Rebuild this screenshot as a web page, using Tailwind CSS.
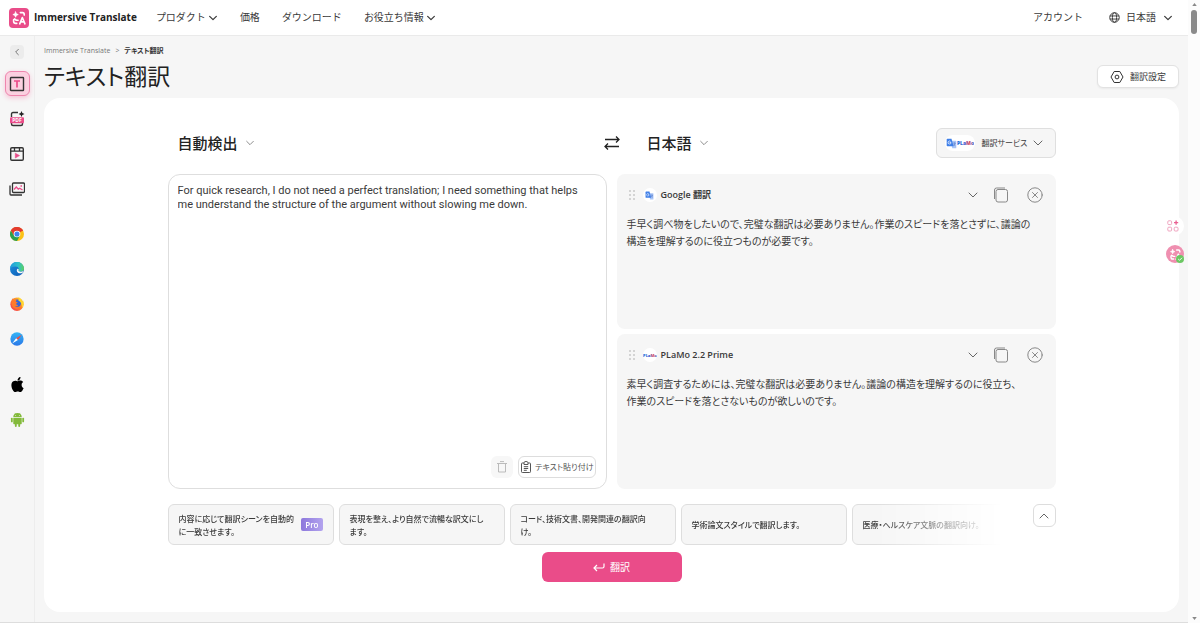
<!DOCTYPE html>
<html lang="ja">
<head>
<meta charset="utf-8">
<meta name="viewport" content="width=device-width, initial-scale=1">
<title>テキスト翻訳 - Immersive Translate</title>
<script src="https://cdn.jsdelivr.net/npm/@tailwindcss/browser@4"></script>
</head>
<body class="flex min-h-screen bg-[#f6f6f6] font-['Open_Sans','Noto_Sans_CJK_JP',sans-serif] text-[10px] text-[#3a3a3a] [font-feature-settings:'palt']">

<svg class="absolute size-0" aria-hidden="true">
  <defs>
    <linearGradient id="plamo-fill" x1="0" x2="1"><stop offset="0" stop-color="#1d6fd8"/><stop offset=".45" stop-color="#3b5bd0"/><stop offset=".7" stop-color="#e0455a"/><stop offset="1" stop-color="#3b6fe0"/></linearGradient>
    <linearGradient id="edge-fill" x1="0" y1="0" x2="1" y2="1"><stop offset="0" stop-color="#1f8fdc"/><stop offset="1" stop-color="#0c59b4"/></linearGradient>
    <linearGradient id="edge-top" x1="0" x2="1"><stop offset="0" stop-color="#1f9ae0"/><stop offset=".6" stop-color="#2fc0c8"/><stop offset="1" stop-color="#5fd35a"/></linearGradient>
    <linearGradient id="fox-fill" x1="0" y1="1" x2="1" y2="0"><stop offset="0" stop-color="#f0305a"/><stop offset=".5" stop-color="#ff7a2a"/><stop offset="1" stop-color="#ffe02e"/></linearGradient>
    <linearGradient id="safari-fill" x1="0" y1="0" x2="0" y2="1"><stop offset="0" stop-color="#35b4f5"/><stop offset="1" stop-color="#2a78e8"/></linearGradient>
    <symbol id="chevron" viewBox="0 0 12 12"><path d="M2 4l4 4 4-4" fill="none" stroke="currentColor" stroke-linecap="round" stroke-linejoin="round"/></symbol>
    <symbol id="mark" viewBox="0 0 20 20" fill="none" stroke="#fff" stroke-width="1.8" stroke-linecap="round" stroke-linejoin="round">
      <path d="M6.200 3.200l.9 2.100 2.100.9-2.100.9-.9 2.100-.9-2.100-2.100-.9 2.100-.9z" fill="#fff" stroke-width=".8"/>
      <path d="M11.500 4h2.500q1.800 0 1.800 2v.8M4 12v1.500q0 2.500 2.500 2.500h1M5 11l2 1.500h2M10.800 16.500l2.900-7 2.900 7M11.800 14.300h3.800"/>
    </symbol>
    <symbol id="gtranslate" viewBox="0 0 16 16">
      <path d="M7 4h7q1 0 1 1v9q0 1-1 1H9z" fill="#a9c5f7"/><path d="M2 1h6l3 11H2q-1 0-1-1V2q0-1 1-1z" fill="#3f7fe8"/>
      <path d="M7.300 6.500H5.200M7.300 6.500A2.200 2.200 0 1 1 6.500 4.900" fill="none" stroke="#fff"/><path d="M10.500 7.500h3.500M12.200 6.500v1M13.300 7.500q-.5 2.500-2.300 3.800M11.200 9q.8 1.600 2.300 2.400" stroke="#4a6fc0" stroke-width=".8" fill="none"/>
    </symbol>
    <symbol id="grip" viewBox="0 0 6 10"><g fill="#999"><circle cx="1" cy="1" r=".7"/><circle cx="5" cy="1" r=".7"/><circle cx="1" cy="5" r=".7"/><circle cx="5" cy="5" r=".7"/><circle cx="1" cy="9" r=".7"/><circle cx="5" cy="9" r=".7"/></g></symbol>
    <symbol id="copy" viewBox="0 0 16 16"><g fill="none" stroke="#888"><rect x="3" y="2.500" width="11.500" height="12.500" rx="2"/><path d="M1.500 12V3q0-2 2-2h8.500"/></g></symbol>
    <symbol id="close" viewBox="0 0 16 16"><g fill="none" stroke="#888" stroke-linecap="round"><circle cx="8" cy="8" r="7.200"/><path d="M5.500 5.500l5 5M10.500 5.500l-5 5"/></g></symbol>
  </defs>
</svg>

<div class="flex min-w-0 flex-1 flex-col border-b border-[#ddd]">
  <header class="flex h-9 items-center border-b border-[#eaeaea] bg-white pr-[15px] pl-[9px] [font-feature-settings:normal]">
    <a href="#" class="flex items-center gap-[5px] text-[10px] font-bold text-[#222]">
      <span class="flex size-5 items-center justify-center rounded bg-[#e94c89]"><svg class="size-[18px]"><use href="#mark"/></svg></span>
      Immersive Translate
    </a>
    <nav class="ml-[19px] flex items-center gap-[22px]">
      <button class="flex items-center gap-0.5">プロダクト<svg class="size-2.5 stroke-[1.500]"><use href="#chevron"/></svg></button>
      <a href="#">価格</a>
      <a href="#">ダウンロード</a>
      <button class="flex items-center gap-0.5">お役立ち情報<svg class="size-2.5 stroke-[1.500]"><use href="#chevron"/></svg></button>
    </nav>
    <a href="#" class="ml-auto">アカウント</a>
    <label class="ml-[26px] flex items-center">
      <svg class="mr-1.5 size-[11px]" viewBox="0 0 12 12" fill="none" stroke="#333"><circle cx="6" cy="6" r="5.200"/><ellipse cx="6" cy="6" rx="2.300" ry="5.200"/><path d="M1 4.300h10M1 7.700h10"/></svg>
      <select aria-label="表示言語" class="appearance-none bg-transparent"><option>日本語</option></select>
      <svg class="ml-[7px] size-2.5 stroke-[1.500]"><use href="#chevron"/></svg>
    </label>
  </header>

  <div class="flex flex-1">
    <aside class="flex w-[35px] shrink-0 flex-col items-center border-r border-[#ededed] pt-[9px]">
      <button aria-label="サイドバーを閉じる" class="flex size-[14px] items-center justify-center rounded-sm bg-[#ececec]"><svg class="size-2 rotate-90"><use href="#chevron"/></svg></button>
      <nav class="mt-3 flex flex-col items-center gap-[11px]">
        <a href="#" aria-label="テキスト" class="flex size-[25px] items-center justify-center rounded-md border border-[#ee86ae] bg-[#fbd0e0] shadow-[0_2px_5px_#f5c4d6]">
          <svg class="size-4" viewBox="0 0 16 16" fill="none"><rect x="1.500" y="1.500" width="13" height="13" rx=".5" stroke="#333" stroke-width="1.400"/><path d="M5 5h6M8 5v6.500" stroke="#ea4c89" stroke-width="1.700"/></svg></a>
        <a href="#" aria-label="PDF" class="flex size-6 items-center justify-center">
          <svg class="size-4" viewBox="0 0 16 16" fill="none"><path d="M2.500 6V3q0-1.500 1.500-1.500h5M2.500 12v1q0 1.500 1.500 1.500h8q1.500 0 1.500-1.500v-1" stroke="#333" stroke-width="1.400"/><path d="M12.500 0l.9 2.100 2.100.9-2.100.9-.9 2.100-.9-2.100L9.500 3l2.100-.9z" fill="#222"/><rect x="1" y="6.200" width="14" height="6" rx="1" fill="#ea4c89"/><text x="8" y="11" text-anchor="middle" font-size="5" font-weight="700" fill="#fff">PDF</text></svg></a>
        <a href="#" aria-label="動画" class="flex size-6 items-center justify-center">
          <svg class="size-4" viewBox="0 0 16 16" fill="none"><rect x="1.700" y="1.700" width="12.600" height="12.600" rx="1.200" stroke="#333" stroke-width="1.400"/><path d="M2 5.200h12M5.500 2v3M10.500 2v3" stroke="#333" stroke-width="1.300"/><path d="M6.300 7.200l4.200 2.400-4.200 2.400z" fill="#ea4c89" stroke="#ea4c89" stroke-width=".6"/></svg></a>
        <a href="#" aria-label="画像" class="flex size-6 items-center justify-center">
          <svg class="size-4" viewBox="0 0 16 16" fill="none"><rect x="3.500" y="2" width="12" height="9.500" rx="1" stroke="#333" stroke-width="1.300"/><path d="M1 4.500V13q0 1 1 1h11" stroke="#333" stroke-width="1.300"/><path d="M5 8.500l2.300-2.500 2 2.200 1.500-1L13.500 9M11.500 5h1.500" stroke="#ea4c89" stroke-width="1.300"/></svg></a>
      </nav>
      <nav class="mt-[26px] flex flex-col items-center gap-[21px]">
        <a href="#" aria-label="Chrome"><svg class="size-[14px]" viewBox="0 0 16 16"><circle cx="8" cy="8" r="8" fill="#fbc116"/><path d="M8 8L1.070 4A8 8 0 0 1 14.930 4z" fill="#e33b2e"/><path d="M1.070 4A8 8 0 0 0 8 16l3.200-6L8 8 4.800 10z" fill="#2da04e"/><path d="M8 4.300h6.930A8 8 0 0 0 1.070 4l3.600 6z" fill="#e33b2e"/><circle cx="8" cy="8" r="3.800" fill="#fff"/><circle cx="8" cy="8" r="2.900" fill="#3f83ee"/></svg></a>
        <a href="#" aria-label="Edge"><svg class="size-[14px]" viewBox="0 0 16 16"><circle cx="8" cy="8" r="8" fill="url(#edge-fill)"/><path d="M0 8A8 8 0 0 1 16 7.500Q16 11 12 11q-2.500 0-2.500-1.200.6-.6.500-1.800Q9.700 5.200 6 5.200 1.500 5.200 0 8z" fill="url(#edge-top)"/><path d="M10 8.300q-.4 1-.4 1.500.3 1.300 2.700 1.200 1.700 0 3.200-1l-.8 2Q12 13.600 9.500 12.600 7.500 11.500 7.700 9.500q.3-1.600 1-1.900 1 .1 1.300.7z" fill="#f6f6f6"/></svg></a>
        <a href="#" aria-label="Firefox"><svg class="size-[14px]" viewBox="0 0 16 16"><circle cx="8" cy="8.300" r="7.600" fill="url(#fox-fill)"/><circle cx="8.300" cy="7" r="4.200" fill="#3566d6"/><path d="M2 3.500Q3 1.500 3.500 1q.3 1.500 1.500 2.200 1.500-.3 2.500.6Q6.500 4.500 6.700 5.500l2 .5Q8.500 7 7 7.400q0 2 2.300 1.800Q8 11.500 5.500 10.200 7.500 13 11 11.500 8 15.500 3.500 12 1 9 2 3.500z" fill="#ff7a2c"/><path d="M9.500 0q4 2 4 5.500L15 4q1.500 5-1.200 8.500Q14 6 9.500 4q1-2 0-4z" fill="#ffd92e"/></svg></a>
        <a href="#" aria-label="Safari"><svg class="size-[14px]" viewBox="0 0 16 16"><circle cx="8" cy="8" r="7.600" fill="url(#safari-fill)"/><path d="M13.500 3L7 7l2 2z" fill="#f04a3c"/><path d="M2.500 13L7 7l2 2z" fill="#fff"/></svg></a>
      </nav>
      <nav class="mt-[31px] flex flex-col items-center gap-5">
        <a href="#" aria-label="iOS"><svg class="size-[15px]" viewBox="0 0 24 24"><path d="M12.200 6.900c-.9 0-2.400-1.100-4-1-2 0-3.900 1.200-5 3-2.100 3.700-.5 9.100 1.500 12.100 1 1.500 2.200 3.100 3.800 3 1.500-.1 2.100-1 3.900-1s2.400 1 4 .9c1.600 0 2.700-1.500 3.700-2.900 1.200-1.700 1.600-3.300 1.700-3.400 0 0-3.200-1.300-3.300-5 0-3.100 2.500-4.500 2.600-4.600-1.400-2.100-3.600-2.300-4.400-2.400-2-.2-3.700 1.100-4.500 1.100zM15.500 3.800C16.400 2.800 16.900 1.400 16.800 0c-1.200 0-2.700.8-3.500 1.800-.8.900-1.500 2.300-1.300 3.700 1.300.1 2.700-.7 3.500-1.700z"/></svg></a>
        <a href="#" aria-label="Android"><svg class="size-[15px]" viewBox="0 0 16 16" fill="#83ba3b"><path d="M3.500 5.300a4.500 4.300 0 0 1 9 0zM3.500 6h9v6.200q0 .8-.8.8H4.300q-.8 0-.8-.8z"/><path d="M5.200 1l1 1.500M10.800 1l-1 1.500" stroke="#83ba3b" stroke-width=".6"/><rect x="1" y="6" width="1.900" height="5" rx=".9"/><rect x="13.100" y="6" width="1.900" height="5" rx=".9"/><rect x="5.200" y="11" width="2" height="5" rx="1"/><rect x="8.800" y="11" width="2" height="5" rx="1"/><circle cx="6" cy="3.800" r=".5" fill="#fff"/><circle cx="10" cy="3.800" r=".5" fill="#fff"/></svg></a>
      </nav>
    </aside>

    <main class="flex min-w-0 flex-1 flex-col pt-2 pr-[9px] pb-2.5 pl-[9px]">
      <div class="flex items-end justify-between pb-1.5">
        <div>
          <nav aria-label="パンくず" class="flex h-[14px] items-center gap-[5px] text-[7px] text-[#777]"><a href="#">Immersive Translate</a><span>&gt;</span><span class="font-bold text-[#333]">テキスト翻訳</span></nav>
          <h1 class="mt-0.5 h-8 text-[23px]/8 font-normal text-[#222]">テキスト翻訳</h1>
        </div>
        <button class="mb-1 flex h-[23px] items-center gap-1.5 rounded-md border border-[#e2e2e2] bg-white px-3 text-[9px] shadow-xs">
          <svg class="size-[14px]" viewBox="0 0 14 14" fill="none" stroke="#333"><path d="M4.200 1.500h5.600L13 7l-3.200 5.500H4.200L1 7z" stroke-linejoin="round"/><circle cx="7" cy="7" r="1.900"/></svg>翻訳設定
        </button>
      </div>

      <section class="flex-1 rounded-2xl bg-white px-6 pt-[30px] pb-[30px]">
        <div class="mx-auto flex max-w-[888px] flex-col">
          <div class="grid h-[30px] grid-cols-[1fr_auto_1fr] items-center">
            <label class="flex items-center gap-1.5 pl-2.5 text-[15px]">
              <select aria-label="原文の言語" class="appearance-none bg-transparent font-medium text-[#222]"><option>自動検出</option></select>
              <svg class="size-2.5 text-[#777]"><use href="#chevron"/></svg>
            </label>
            <button aria-label="言語を入れ替える"><svg class="size-4" viewBox="0 0 16 16" fill="none" stroke="#222" stroke-width="1.300"><path d="M1 4.500h14M12 1.500l3 3-3 3M15 11.500H1M4 8.500l-3 3 3 3"/></svg></button>
            <div class="flex items-center justify-between pl-[27px]">
              <label class="flex items-center gap-1.5 text-[15px]">
                <select aria-label="訳文の言語" class="appearance-none bg-transparent font-medium text-[#222]"><option>日本語</option></select>
                <svg class="size-2.5 text-[#777]"><use href="#chevron"/></svg>
              </label>
              <button class="flex h-[30px] w-[120px] items-center rounded-md border border-[#dfdfdf] bg-[#f6f6f6] pr-[11px] pl-2 text-[8px] whitespace-nowrap">
                <span class="flex h-4 shrink-0 items-center rounded-full bg-white px-px"><svg class="size-[11px]"><use href="#gtranslate"/></svg><svg class="h-4 w-[17px]" viewBox="0 0 17 16"><text x="8.500" y="10" text-anchor="middle" font-size="5" font-weight="800" fill="url(#plamo-fill)">PLaMo</text></svg></span>
                <span class="ml-[7px]">翻訳サービス</span>
                <svg class="ml-auto size-3 text-[#666]"><use href="#chevron"/></svg>
              </button>
            </div>
          </div>

          <div class="mt-4 grid h-[315px] grid-cols-2 gap-2.5">
            <div class="flex flex-col rounded-xl border border-[#dedede] pt-[9px] pr-2.5 pb-2.5 pl-[9px]">
              <textarea aria-label="原文" class="w-full flex-1 resize-none pr-1 font-['Roboto',sans-serif] text-[11px]/[14px] outline-none">For quick research, I do not need a perfect translation; I need something that helps me understand the structure of the argument without slowing me down.</textarea>
              <div class="flex justify-end gap-[5px]">
                <button aria-label="消去" class="flex size-[22px] items-center justify-center rounded-md bg-[#f7f7f7]"><svg class="size-3" viewBox="0 0 12 12" fill="none" stroke="#bbb"><path d="M1 2.500h10M4 .6h4M2.500 2.500V11h7V2.500"/></svg></button>
                <button class="flex h-[22px] items-center gap-[3px] rounded-md border border-[#ddd] px-px text-[8px] text-[#555]"><svg class="size-3" viewBox="0 0 12 12" fill="none" stroke="#555"><path d="M4 2H2.200q-.7 0-.7.700V10.700q0 .8.800.8h7.400q.8 0 .8-.8V2.700q0-.7-.7-.7H8"/><path d="M4 3.500V1.500L5 .6h2L8 1.500v2zM3.800 5.700h4.400M3.800 7.500h4.400M3.800 9.300h3"/></svg>テキスト貼り付け</button>
              </div>
            </div>
            <div class="grid grid-rows-2 gap-[5px]">
              <article class="rounded-lg bg-[#f6f6f6] px-2.5 pt-3">
                <header class="flex h-[18px] items-center pl-0.5 text-[9px]">
                  <svg class="h-2.5 w-1.5"><use href="#grip"/></svg>
                  <span class="ml-2 flex size-[14px] items-center justify-center rounded-full bg-white"><svg class="size-[9px]"><use href="#gtranslate"/></svg></span>
                  <h2 class="ml-1 font-semibold">Google 翻訳</h2>
                  <div class="ml-auto flex items-center gap-3.5 pr-[3px] text-[#666]">
                    <button aria-label="折りたたむ"><svg class="size-3"><use href="#chevron"/></svg></button>
                    <button aria-label="コピー"><svg class="size-4"><use href="#copy"/></svg></button>
                    <button aria-label="閉じる" class="ml-1"><svg class="size-4"><use href="#close"/></svg></button>
                  </div>
                </header>
                <p class="mt-3 text-[10px]/[17px]">手早く調べ物をしたいので、完璧な翻訳は必要ありません。作業のスピードを落とさずに、議論の<br>構造を理解するのに役立つものが必要です。</p>
              </article>
              <article class="rounded-lg bg-[#f6f6f6] px-2.5 pt-3">
                <header class="flex h-[18px] items-center pl-0.5 text-[9px]">
                  <svg class="h-2.5 w-1.5"><use href="#grip"/></svg>
                  <span class="ml-2 flex size-[14px] items-center justify-center rounded-full bg-white"><svg class="h-3 w-[14px]" viewBox="0 0 14 12"><text x="7" y="7.500" text-anchor="middle" font-size="4" font-weight="800" fill="url(#plamo-fill)">PLaMo</text></svg></span>
                  <h2 class="ml-1 font-semibold">PLaMo 2.2 Prime</h2>
                  <div class="ml-auto flex items-center gap-3.5 pr-[3px] text-[#666]">
                    <button aria-label="折りたたむ"><svg class="size-3"><use href="#chevron"/></svg></button>
                    <button aria-label="コピー"><svg class="size-4"><use href="#copy"/></svg></button>
                    <button aria-label="閉じる" class="ml-1"><svg class="size-4"><use href="#close"/></svg></button>
                  </div>
                </header>
                <p class="mt-3 text-[10px]/[17px]">素早く調査するためには、完璧な翻訳は必要ありません。議論の構造を理解するのに役立ち、<br>作業のスピードを落とさないものが欲しいのです。</p>
              </article>
            </div>
          </div>

          <div class="mt-[15px] flex items-start gap-[23px]">
            <div class="flex min-w-0 flex-1 gap-[5px] overflow-hidden text-[8px]/[13px] font-medium whitespace-nowrap [mask-image:linear-gradient(to_right,#000_84%,transparent_99%)]">
              <button class="flex h-[41px] w-[166px] shrink-0 items-center rounded-md border border-[#dedede] bg-[#f6f6f6] px-2.5 text-left"><span>内容に応じて翻訳シーンを自動的<br>に一致させます。</span><span class="ml-auto rounded-xs bg-linear-to-r from-[#8d78dc] to-[#b3a3ee] px-1 text-[8px] font-semibold text-white">Pro</span></button>
              <button class="flex h-[41px] w-[166px] shrink-0 items-center rounded-md border border-[#dedede] bg-[#f6f6f6] px-2.5 text-left">表現を整え、より自然で流暢な訳文にし<br>ます。</button>
              <button class="flex h-[41px] w-[166px] shrink-0 items-center rounded-md border border-[#dedede] bg-[#f6f6f6] px-2.5 text-left">コード、技術文書、開発関連の翻訳向<br>け。</button>
              <button class="flex h-[41px] w-[166px] shrink-0 items-center rounded-md border border-[#dedede] bg-[#f6f6f6] px-2.5 text-left">学術論文スタイルで翻訳します。</button>
              <button class="flex h-[41px] w-[166px] shrink-0 items-center rounded-md border border-[#dedede] bg-[#f6f6f6] px-2.5 text-left">医療・ヘルスケア文脈の翻訳向け。</button>
            </div>
            <button aria-label="折りたたむ" class="flex size-[23px] items-center justify-center rounded-md border border-[#ddd] text-[#666]"><svg class="size-3 rotate-180"><use href="#chevron"/></svg></button>
          </div>
          <button class="mx-auto mt-[7px] flex h-[30px] w-[140px] items-center justify-center gap-[5px] rounded-md bg-[#ea4c89] text-[10px] text-white"><svg class="h-2.5 w-3" viewBox="0 0 12 10" fill="none" stroke="#fff" stroke-width="1.200"><path d="M4 3L1 6l3 3M1 6h8.500q1.500 0 1.500-1.500V1.500"/></svg>翻訳</button>
        </div>
      </section>
    </main>
  </div>
</div>

<div aria-hidden="true" class="flex w-3 shrink-0 flex-col items-center justify-between bg-[#fcfcfc] py-[3px]">
  <div class="flex flex-col items-center gap-1"><svg class="h-[3px] w-[5px]" viewBox="0 0 6 4"><path d="M3 0l3 4H0z" fill="#888"/></svg><div class="h-6 w-1.5 rounded-full bg-[#8a8a8a]"></div></div>
  <svg class="h-[3px] w-[5px]" viewBox="0 0 6 4"><path d="M3 4l3-4H0z" fill="#888"/></svg>
</div>

<div class="fixed top-[216px] right-4 flex flex-col items-end gap-[9px]">
  <button aria-label="ツール" class="flex h-5 w-[22px] items-center justify-center rounded-full bg-white"><svg class="size-3" viewBox="0 0 12 12" fill="none" stroke="#efa3bf"><rect x=".8" y=".8" width="3.800" height="3.800" rx="1"/><rect x=".8" y="7.200" width="3.800" height="3.800" rx="1"/><rect x="7.200" y="7.200" width="3.800" height="3.800" rx="1"/><path d="M9.100.5v4.200M7 2.600h4.200" stroke="#ea5f92" stroke-width="1.300"/></svg></button>
  <button aria-label="ページを翻訳" class="relative flex size-[18px] items-center justify-center rounded-full bg-[#ef8fb0]"><svg class="size-[15px]"><use href="#mark"/></svg><svg class="absolute right-0 bottom-0 size-2" viewBox="0 0 8 8"><circle cx="4" cy="4" r="4" fill="#6cc763"/><path d="M2.200 4l1.300 1.300L6 2.800" fill="none" stroke="#fff" stroke-width=".9"/></svg></button>
</div>
</body>
</html>
